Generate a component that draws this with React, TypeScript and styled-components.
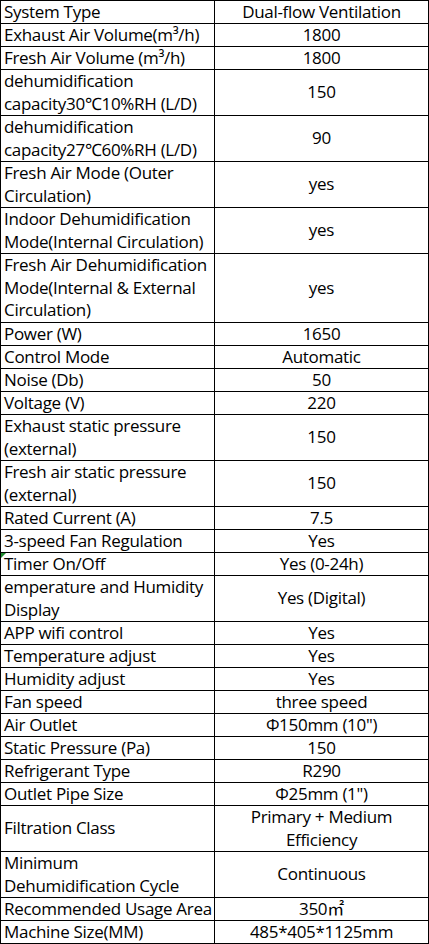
import * as React from "react";
import styled, { createGlobalStyle } from "styled-components";

interface Spec {
  label: string;
  value: string;
  lines: number;
  flag?: boolean;
}

// "\n" marks where the original sheet wraps a cell
const specs: Spec[] = [
  { label: "System Type", value: "Dual-flow Ventilation", lines: 1 },
  { label: "Exhaust Air Volume(m³/h)", value: "1800", lines: 1 },
  { label: "Fresh Air Volume (m³/h)", value: "1800", lines: 1 },
  { label: "dehumidification\ncapacity30℃10%RH (L/D)", value: "150", lines: 2 },
  { label: "dehumidification\ncapacity27℃60%RH (L/D)", value: "90", lines: 2 },
  { label: "Fresh Air Mode (Outer\nCirculation)", value: "yes", lines: 2 },
  { label: "Indoor Dehumidification\nMode(Internal Circulation)", value: "yes", lines: 2 },
  { label: "Fresh Air Dehumidification\nMode(Internal & External\nCirculation)", value: "yes", lines: 3 },
  { label: "Power (W)", value: "1650", lines: 1 },
  { label: "Control Mode", value: "Automatic", lines: 1 },
  { label: "Noise (Db)", value: "50", lines: 1 },
  { label: "Voltage (V)", value: "220", lines: 1 },
  { label: "Exhaust static pressure\n(external)", value: "150", lines: 2 },
  { label: "Fresh air static pressure\n(external)", value: "150", lines: 2 },
  { label: "Rated Current (A)", value: "7.5", lines: 1 },
  { label: "3-speed Fan Regulation", value: "Yes", lines: 1 },
  { label: "Timer On/Off", value: "Yes (0-24h)", lines: 1, flag: true },
  { label: "emperature and Humidity\nDisplay", value: "Yes (Digital)", lines: 2 },
  { label: "APP wifi control", value: "Yes", lines: 1 },
  { label: "Temperature adjust", value: "Yes", lines: 1 },
  { label: "Humidity adjust", value: "Yes", lines: 1 },
  { label: "Fan speed", value: "three speed", lines: 1 },
  { label: "Air Outlet", value: "Φ150mm (10\")", lines: 1 },
  { label: "Static Pressure (Pa)", value: "150", lines: 1 },
  { label: "Refrigerant Type", value: "R290", lines: 1 },
  { label: "Outlet Pipe Size", value: "Φ25mm (1\")", lines: 1 },
  { label: "Filtration Class", value: "Primary + Medium\nEfficiency", lines: 2 },
  { label: "Minimum\nDehumidification Cycle", value: "Continuous", lines: 2 },
  { label: "Recommended Usage Area", value: "350㎡", lines: 1 },
  { label: "Machine Size(MM)", value: "485*405*1125mm", lines: 1 },
];

const GlobalStyle = createGlobalStyle`
  html, body {
    margin: 0;
    padding: 0;
    background: #ffffff;
  }
  body {
    font-family: "Open Sans", "Noto Sans", "Noto Sans CJK SC", sans-serif;
    color: #000000;
  }
`;

const Table = styled.div`
  display: grid;
  grid-template-columns: 214px 214px;
  width: 429px;
  border-top: 1px solid #000;
  border-left: 1px solid #000;
  box-sizing: border-box;
`;

const Cell = styled.div<{ $lines: number }>`
  position: relative;
  box-sizing: border-box;
  height: ${({ $lines }) => $lines * 23}px;
  border-right: 1px solid #000;
  border-bottom: 1px solid #000;
  display: flex;
  align-items: center;
  font-size: 17px;
  line-height: 22.8px;
  letter-spacing: -0.3px;
  white-space: pre-line;
  overflow: visible;
`;

const Label = styled(Cell)`
  padding: 0 0 0 3px;
  text-align: left;
  white-space: pre;
`;

const Value = styled(Cell)`
  justify-content: center;
  text-align: center;
`;

const Flag = styled.span`
  position: absolute;
  top: 0;
  left: 0;
  width: 0;
  height: 0;
  border-top: 5px solid #1e8a2e;
  border-right: 5px solid transparent;
`;

export default function App() {
  return (
    <>
      <GlobalStyle />
      <Table>
        {specs.map((s) => (
          <React.Fragment key={s.label}>
            <Label $lines={s.lines}>
              {s.flag && <Flag />}
              {s.label}
            </Label>
            <Value $lines={s.lines}>{s.value}</Value>
          </React.Fragment>
        ))}
      </Table>
    </>
  );
}
